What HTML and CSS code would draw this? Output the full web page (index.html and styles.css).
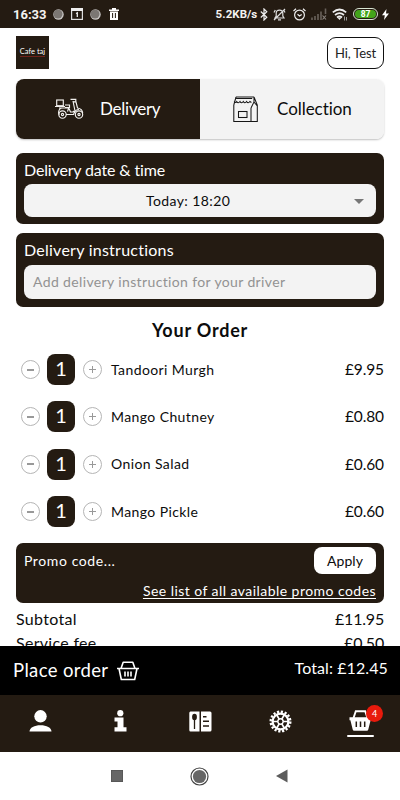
FILE: index.html
```html
<!DOCTYPE html>
<html lang="en">
<head>
<meta charset="utf-8">
<title>Cafe taj – Your Order</title>
<link rel="stylesheet" href="styles.css">
</head>
<body>
<header class="status">
  <span class="clock">16:33</span>
  <svg class="s-dot" width="11" height="11" viewBox="0 0 11 11"><circle cx="5.5" cy="5.5" r="5.2" fill="#c9c7c5"/><circle cx="5" cy="5" r="4.5" fill="#7b7773"/></svg>
  <svg class="s-cal" width="12" height="12" viewBox="0 0 12 12"><rect x=".6" y=".6" width="10.8" height="10.8" fill="none" stroke="#ddd" stroke-width="1.2"/><path d="M0 0h12v3H0z" fill="#eee"/><path d="M5 5.5l1.3-.7V9" fill="none" stroke="#eee" stroke-width="1.3"/></svg>
  <svg class="s-dot2" width="11" height="11" viewBox="0 0 11 11"><circle cx="5.5" cy="5.5" r="5.2" fill="#c9c7c5"/><circle cx="5" cy="5" r="4.5" fill="#7b7773"/></svg>
  <svg class="s-trash" width="10" height="12" viewBox="0 0 10 12"><path d="M0 1.5h3V0h4v1.5h3V3H0zM1 3.5h8V12H1z" fill="#fff"/><path d="M3.6 5v5M6.4 5v5" stroke="#241b12" stroke-width="1"/></svg>
  <span class="speed">5.2KB/s</span>
  <svg class="s-bt" width="8" height="13" viewBox="0 0 8 13"><path d="M.8 3.5l6 5.7L4 12V1l2.8 2.8-6 5.7" fill="none" stroke="#eee" stroke-width="1.2"/></svg>
  <svg class="s-bell" width="13" height="13" viewBox="0 0 13 13"><path d="M2 10h9L9.8 8V5.2C9.800 3.400 8.300 2.200 6.500 2.200S3.200 3.400 3.200 5.200V8zM5 11.800h3M1 4.500L2.300 2M12 4.500L10.700 2M1 12L12 1" fill="none" stroke="#ddd" stroke-width="1.2"/></svg>
  <svg class="s-alarm" width="13" height="13" viewBox="0 0 13 13"><circle cx="6.500" cy="7" r="4.900" fill="none" stroke="#eee" stroke-width="1.200"/><path d="M.5 3L3 .8M12.500 3L10 .8M4.500 6.200L6.500 8l2.200-1.500" fill="none" stroke="#eee" stroke-width="1.200"/></svg>
  <svg class="s-signal" width="16" height="12" viewBox="0 0 16 12"><path d="M1 12V9.500M4 12V8M7 12V6M10 12V3.500M14.500 6V.5" stroke="#69625b" stroke-width="1.600"/><path d="M11.500 7.500l3.500 4M15 7.500l-3.500 4" stroke="#8b8580" stroke-width="1.100"/></svg>
  <svg class="s-wifi" width="16" height="13" viewBox="0 0 16 13"><path d="M.8 4.300Q7.500-1.300 14.200 4.300M3 7Q7.500 3.300 12 7M5 9.500Q7.500 7.500 10 9.500" fill="none" stroke="#eee" stroke-width="1.700"/><path d="M5.600 9.700h3.800L7.500 12z" fill="#eee"/><path d="M12.500 8.500v4M14.500 9v3.500" stroke="#aaa" stroke-width=".9"/></svg>
  <span class="battery"><span class="charge">87</span></span>
  <svg class="s-bolt" width="7" height="11" viewBox="0 0 7 11"><path d="M4.500 0L0 6.200h2.800L2 11l5-6.500H4z" fill="#fff"/></svg>
</header>

<main class="page">
  <div class="top">
    <div class="logo"><span>Cafe taj</span></div>
    <button class="user">Hi, Test</button>
  </div>

  <div class="modes">
    <div class="mode active">
      <svg class="scooter" width="30" height="22" viewBox="0 0 30 22" fill="none" stroke="#f3f1ee" stroke-width="1.150"><rect x="1.700" y="2" width="6.600" height="5.700"/><path d="M0 8.500h10M10 7h4.500v2.500H10M4 10h10M3.500 15.500c0-3 1.500-5.500 4-5.500h6.200l-1.200 3.500M3.300 16h1.500M11 16.500h7.500l1.500-3.500L18 3M15.500 1.300h5.300v2.600H18M21 4l1.500 6c3 .5 5 2.500 5.200 5M14 10.500l1.500 3.500h2.500l1-1"/><circle cx="7.500" cy="16.500" r="3.700"/><circle cx="7.500" cy="16.500" r="1.100"/><circle cx="24" cy="16.500" r="3.700"/><circle cx="24" cy="16.500" r="1.100"/><path d="M19.500 15c.5-2.500 2-3.500 4.500-3.500"/></svg>
      <span>Delivery</span>
    </div>
    <div class="mode">
      <svg class="shop" width="25" height="27" viewBox="0 0 25 27" fill="none" stroke="#161616" stroke-width="1.050"><path d="M3 1h18M.8 9v16.500h23.500V9L21 1M3 1L.8 9M3.200 2.500h16M18 12v13.500M21 1v5l-3 6M21 6l3.300 4"/><path d="M1.200 5.500q1 2 2.500 0 1.500 2.500 3.300 0 1.500 2.500 3.300 0 1.500 2.500 3.300 0 1.500 2.500 3.300 0l1.500 1"/><rect x="5.500" y="15.500" width="8.500" height="6"/></svg>
      <span>Collection</span>
    </div>
  </div>

  <section class="card when">
    <h2>Delivery date &amp; time</h2>
    <div class="field select"><span>Today: 18:20</span><i class="caret"></i></div>
  </section>

  <section class="card notes">
    <h2>Delivery instructions</h2>
    <div class="field hint">Add delivery instruction for your driver</div>
  </section>

  <h1>Your Order</h1>
  <ul class="items">
    <li><i class="round minus"></i><b class="qty">1</b><i class="round plus"></i><span class="name">Tandoori Murgh</span><span class="price">£9.95</span></li>
    <li><i class="round minus"></i><b class="qty">1</b><i class="round plus"></i><span class="name">Mango Chutney</span><span class="price">£0.80</span></li>
    <li><i class="round minus"></i><b class="qty">1</b><i class="round plus"></i><span class="name">Onion Salad</span><span class="price">£0.60</span></li>
    <li><i class="round minus"></i><b class="qty">1</b><i class="round plus"></i><span class="name">Mango Pickle</span><span class="price">£0.60</span></li>
  </ul>

  <section class="promo">
    <div class="promo-row"><span class="code">Promo code...</span><button class="apply">Apply</button></div>
    <a class="list">See list of all available promo codes</a>
  </section>

  <div class="sum"><span>Subtotal</span><span class="amount">£11.95</span></div>
  <div class="sum"><span>Service fee</span><span class="amount">£0.50</span></div>
</main>

<div class="place">
  <span class="place-label">Place order</span>
  <svg width="22" height="20" viewBox="0 0 22 20" fill="none" stroke="#fff" stroke-width="1.600" stroke-linejoin="round"><path d="M0 7.500h22M2 7.500l2.300 11h13.400l2.300-11M4 7.500L6.200 1.200h9.600L18 7.500M8 10.500v5M11 10.500v5M14 10.500v5"/></svg>
  <span class="total">Total: £12.45</span>
</div>

<nav class="tabs">
  <div class="tab"><svg width="23" height="22" viewBox="0 0 23 22" fill="#fff"><circle cx="11.500" cy="6.300" r="6.200"/><path d="M.5 21.500c0-4 5-6.300 11-6.300s11 2.300 11 6.300z"/></svg></div>
  <div class="tab"><svg width="13" height="22" viewBox="0 0 13 22" fill="#fff"><circle cx="6.300" cy="3.200" r="3.100"/><path d="M.5 7.500h9v9.800h3v4.200H.5v-4.200h3v-5.800h-3z"/></svg></div>
  <div class="tab"><svg width="23" height="21" viewBox="0 0 23 21"><path d="M1.500.5h9v20h-9Q.3 20.500.3 19V2Q.3.500 1.500.5zM12 .5h9q1.500 0 1.500 1.500v17q0 1.500-1.500 1.500h-9z" fill="#fff"/><ellipse cx="5.500" cy="6" rx="2.400" ry="3.200" fill="#241b12"/><path d="M5.500 8v10" stroke="#241b12" stroke-width="1.300"/><path d="M14 5.800h3.500M14 10.300h6M14 15h6" stroke="#241b12" stroke-width="1.500"/></svg></div>
  <div class="tab"><svg width="23" height="23" viewBox="-11.500 -11.500 23 23" fill="none" stroke="#fff"><circle r="9.800" stroke-width="2.400" stroke-dasharray="2.200 1.650"/><circle r="7.900" stroke-width="2.200"/><circle r="2.700" stroke-width="1.500"/><path d="M2.700 0H8M-2.700 0H-8M1.300 2.300L4 7M-1.300 2.300L-4 7M1.300-2.300L4-7M-1.300-2.300L-4-7" stroke-width="1.700"/></svg></div>
  <div class="tab current">
    <svg width="23" height="21" viewBox="0 0 23 21"><path d="M4.500 8L6.800 1.200h9.400L18.500 8" fill="none" stroke="#fff" stroke-width="1.900"/><path d="M.5 7.200h22v3h-.9l-2.300 9.300q-.3 1.200-1.500 1.200H5.200q-1.200 0-1.500-1.200L1.400 10.200H.5z" fill="#fff"/><path d="M7.300 11.500v5.500M11.500 11.500v5.500M15.700 11.500v5.500" stroke="#241b12" stroke-width="1.500"/></svg>
    <i class="underline"></i>
    <span class="badge">4</span>
  </div>
</nav>

<footer class="system">
  <svg width="12" height="12" viewBox="0 0 12 12"><rect width="12" height="12" fill="#555"/><rect x=".8" y=".8" width="10.400" height="10.400" fill="#666"/></svg>
  <svg width="19" height="19" viewBox="0 0 19 19"><circle cx="9.500" cy="9.500" r="8.500" fill="none" stroke="#444" stroke-width="1.200"/><circle cx="9.500" cy="9.500" r="6.600" fill="#666"/></svg>
  <svg width="12" height="14" viewBox="0 0 12 14"><path d="M11.500.5v13L0 7z" fill="#5c5c5c"/></svg>
</footer>
</body>
</html>
```

FILE: styles.css
```css
* { box-sizing: border-box; }
body {
  margin: 0;
  width: 400px;
  height: 800px;
  overflow: hidden;
  display: flex;
  flex-direction: column;
  background: #fff;
  color: #0c0c0c;
  font-family: Lato, "Liberation Sans", sans-serif;
}
h1, h2, ul { margin: 0; padding: 0; }
button { font-family: inherit; padding: 0; margin: 0; }
span, a { white-space: nowrap; }
svg { display: block; flex: none; }

.status {
  flex: none;
  height: 28px;
  padding: 0 11px 0 13px;
  display: flex;
  align-items: center;
  background: #241b12;
  color: #f4f2f0;
  font-family: Roboto, sans-serif;
}
.clock { width: 40px; font-size: 13px; font-weight: 700; letter-spacing: 0; }
.s-cal { margin-left: 7px; }
.s-dot2 { margin-left: 7px; }
.s-trash { margin-left: 8px; }
.speed { width: 43px; margin-left: 97px; font-size: 11.500px; font-weight: 700; letter-spacing: .05px; }
.s-bt { margin-left: 2px; }
.s-bell { margin-left: 5px; }
.s-alarm { margin-left: 7px; }
.s-signal { margin-left: 5px; }
.s-wifi { margin-left: 5px; }
.battery {
  width: 25px;
  height: 12px;
  margin-left: 5px;
  padding: 1px;
  border: 1px solid #d9e6d3;
  border-radius: 6px;
}
.charge {
  display: block;
  height: 8px;
  border-radius: 4px;
  background: #43a41a;
  color: #fff;
  font-size: 8.500px;
  font-weight: 700;
  line-height: 8px;
  text-align: center;
}
.s-bolt { margin-left: 4px; }

.page {
  flex: none;
  height: 618px;
  overflow: hidden;
  padding: 8px 16px 0;
}
.top { display: flex; justify-content: space-between; height: 43px; }
.logo {
  width: 33px;
  height: 33px;
  display: flex;
  align-items: center;
  justify-content: center;
  background: #241b12;
  color: #fff;
  font-size: 7.500px;
}
.logo span { border-bottom: 1px solid #70231b; line-height: 8px; }
.user {
  width: 57px;
  height: 32px;
  margin-top: 1px;
  padding-bottom: 1px;
  border: 1px solid #111;
  border-radius: 9px;
  background: #fff;
  color: #222;
  font-size: 13px;
  letter-spacing: -.15px;
}

.modes {
  display: flex;
  height: 60px;
  margin-bottom: 14px;
  border-radius: 8px;
  overflow: hidden;
  box-shadow: 0 1px 2px rgba(0, 0, 0, .25);
}
.mode {
  flex: 1 1 0;
  min-width: 0;
  display: flex;
  align-items: center;
  padding-left: 33px;
  background: #f3f3f3;
  font-size: 17px;
  letter-spacing: -.05px;
}
.mode.active { flex: none; width: 184px; padding-left: 39px; background: #241b12; color: #fff; letter-spacing: -.25px; }
.mode span { padding-bottom: 1px; }
.scooter { margin-right: 15px; }
.shop { margin-right: 19px; }

.card {
  padding: 7px 8px;
  border-radius: 7px;
  background: #241b12;
  color: #fff;
}
.card h2 { font-size: 16px; font-weight: 400; line-height: 20px; }
.when { height: 71px; }
.when h2 { letter-spacing: -.15px; }
.notes { height: 74px; margin-top: 9px; }
.notes h2 { letter-spacing: .25px; }
.field {
  height: 33px;
  margin-top: 4px;
  padding-bottom: 1px;
  border-radius: 8px;
  background: #f3f3f3;
  color: #0c0c0c;
  display: flex;
  align-items: center;
  font-size: 14px;
}
.select { padding: 0 12px 1px 122px; justify-content: space-between; letter-spacing: .4px; }
.caret { margin-top: 2px; border: 5px solid transparent; border-top-color: #777; border-bottom: 0; }
.hint { height: 34px; margin-top: 5px; padding-left: 9px; color: #929292; letter-spacing: .37px; }

h1 { margin-top: 11px; height: 24px; line-height: 24px; font-size: 18px; text-align: center; letter-spacing: .8px; }
.items { list-style: none; margin-top: 4px; }
.items li { display: flex; align-items: center; height: 47.300px; padding-left: 5px; }
.round {
  width: 19px;
  height: 19px;
  border: 1px solid #b5b5b5;
  border-radius: 50%;
  background: linear-gradient(#999, #999) center / 7px 2px no-repeat;
}
.plus { background: linear-gradient(#999, #999) center / 7px 1px no-repeat, linear-gradient(#999, #999) center / 1px 7px no-repeat; }
.qty {
  width: 28px;
  height: 31px;
  margin: 0 8px 0 7px;
  border-radius: 8px;
  background: #241b12;
  color: #fff;
  font-size: 20px;
  font-weight: 400;
  line-height: 29px;
  text-align: center;
}
.name { margin-left: 9px; padding-bottom: 1px; font-size: 14px; letter-spacing: .4px; }
.price { margin-left: auto; padding-bottom: 1px; font-size: 15.500px; letter-spacing: -.1px; }

.promo {
  height: 60px;
  margin-top: 8px;
  padding: 4px 8px 0;
  border-radius: 7px;
  background: #241b12;
  color: #fff;
  display: flex;
  flex-direction: column;
}
.promo-row { display: flex; justify-content: space-between; align-items: center; height: 27px; }
.code { font-size: 14px; letter-spacing: .6px; }
.apply { width: 62px; height: 27px; border: 0; border-radius: 8px; background: #fff; color: #0c0c0c; font-size: 14px; letter-spacing: .1px; }
.list { align-self: flex-end; margin-top: 7px; font-size: 14px; line-height: 20px; letter-spacing: .45px; text-decoration: underline; text-underline-offset: 2px; text-decoration-thickness: 1px; }
.sum { display: flex; justify-content: space-between; height: 24px; line-height: 24px; font-size: 16px; letter-spacing: .3px; }
.amount { letter-spacing: -.2px; }
.promo + .sum { margin-top: 4px; }

.place {
  flex: none;
  height: 49px;
  padding: 0 12px 0 13px;
  display: flex;
  align-items: center;
  background: #000;
  color: #fff;
}
.place-label { padding-bottom: 1px; font-size: 18.500px; letter-spacing: .35px; margin-right: 9px; }
.total { margin-left: auto; padding-bottom: 6px; font-size: 16px; letter-spacing: .1px; }

.tabs { flex: none; height: 57px; display: flex; background: #241b12; }
.tab { position: relative; flex: 1; height: 52px; display: flex; justify-content: center; align-items: center; }
.current { height: 57px; flex-direction: column; }
.underline { width: 27px; height: 2px; margin-top: 4px; border-radius: 1px; background: #fff; }
.badge {
  position: absolute;
  left: 46px;
  top: 10px;
  width: 17px;
  height: 17px;
  border-radius: 50%;
  background: #e81a0c;
  color: #fff;
  font-size: 9px;
  line-height: 17px;
  text-align: center;
}

.system { flex: 1; display: flex; justify-content: center; align-items: center; gap: 67px; padding-right: 1px; background: #fff; }
```
